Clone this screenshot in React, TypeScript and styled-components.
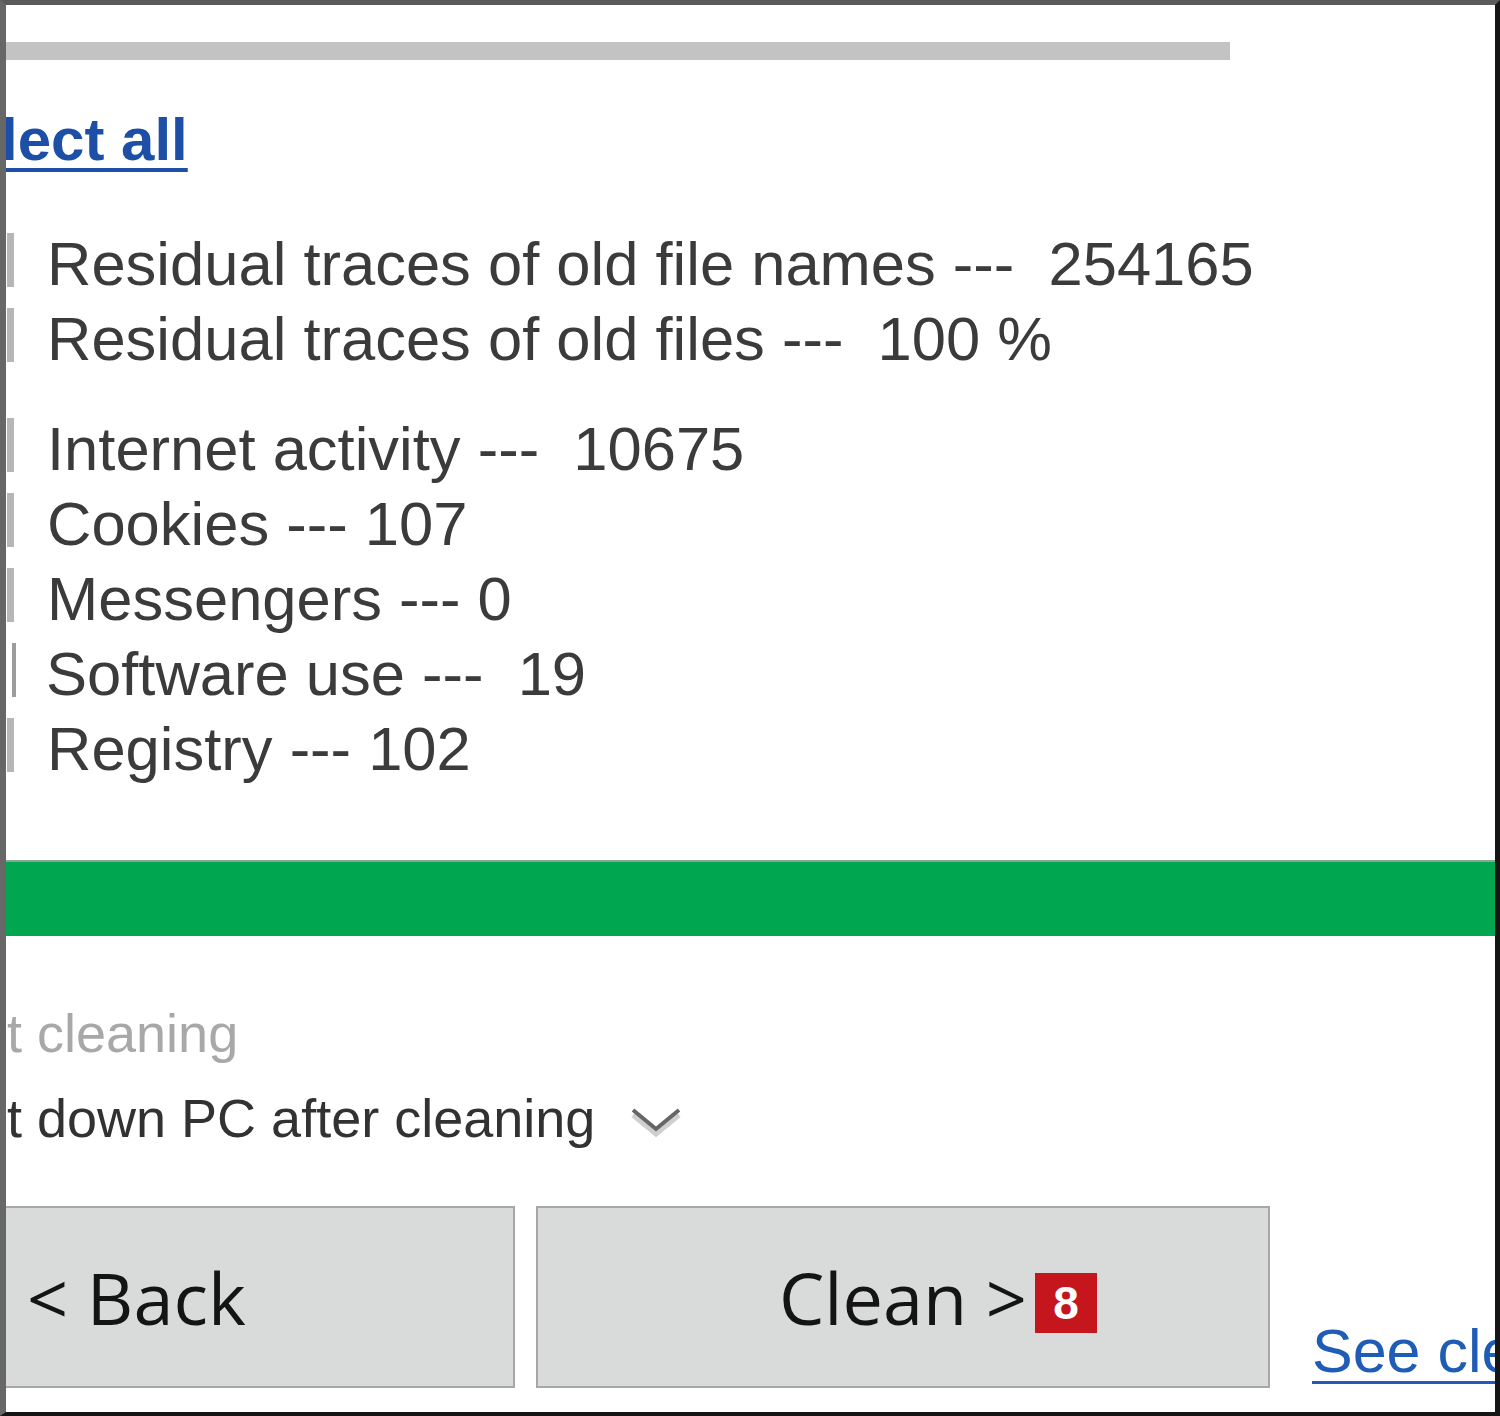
import React from 'react';
import styled, { createGlobalStyle } from 'styled-components';

const GlobalStyle = createGlobalStyle`
  body {
    margin: 0;
    background: #ffffff;
  }
`;

interface Trace {
  label: string;
  shift?: boolean;
}

const systemTraces: Trace[] = [
  { label: 'Residual traces of old file names ---  254165' },
  { label: 'Residual traces of old files ---  100 %' },
];

const activityTraces: Trace[] = [
  { label: 'Internet activity ---  10675' },
  { label: 'Cookies --- 107' },
  { label: 'Messengers --- 0' },
  { label: 'Software use ---  19', shift: true },
  { label: 'Registry --- 102' },
];

const App: React.FC = () => {
  return (
    <>
      <GlobalStyle />
      <Frame>
        <ProgressTrack />
        <SelectAll href='#'>lect all</SelectAll>

        <TraceGroup>
          {systemTraces.map((trace) => (
            <TraceRow key={trace.label}>
              <CheckEdge $shift={trace.shift} />
              <TraceText>{trace.label}</TraceText>
            </TraceRow>
          ))}
        </TraceGroup>

        <TraceGroup $spaced>
          {activityTraces.map((trace) => (
            <TraceRow key={trace.label}>
              <CheckEdge $shift={trace.shift} />
              <TraceText>{trace.label}</TraceText>
            </TraceRow>
          ))}
        </TraceGroup>

        <GreenBand />

        <OptionList>
          <OptionRow $muted>t cleaning</OptionRow>
          <OptionRow>
            t down PC after cleaning
            <Chevron width='54' height='34' viewBox='0 0 54 34'>
              <polyline
                points='4,10 27,29 50,10'
                fill='none'
                stroke='#cfcfcf'
                strokeWidth='5'
              />
              <polyline
                points='4,5 27,24 50,5'
                fill='none'
                stroke='#666666'
                strokeWidth='4'
              />
            </Chevron>
          </OptionRow>
        </OptionList>

        <ActionBar>
          <WizardButton $clipped $width={509}>
            &lt; Back
          </WizardButton>
          <WizardButton $width={734}>
            Clean &gt;
            <StepBadge>8</StepBadge>
          </WizardButton>
          <DetailsLink href='#'>See cleaning details</DetailsLink>
        </ActionBar>
      </Frame>
    </>
  );
};

export default App;

const Frame = styled.div`
  width: 1500px;
  height: 1416px;
  box-sizing: border-box;
  display: flex;
  flex-direction: column;
  overflow: hidden;
  background: #ffffff;
  border-top: 5px solid #5b5b5b;
  border-left: 6px solid #676767;
  border-right: 5px solid #151515;
  border-bottom: 4px solid #151515;
  font-family: 'Liberation Sans', Arial, sans-serif;
`;

const ProgressTrack = styled.div`
  flex-shrink: 0;
  margin-top: 37px;
  width: 1224px;
  height: 18px;
  background: #c3c3c3;
`;

const SelectAll = styled.a`
  align-self: flex-start;
  margin-top: 42px;
  margin-left: -5px;
  font-size: 60px;
  font-weight: 700;
  line-height: 75px;
  color: #1d4fa6;
  text-decoration: underline;
  text-decoration-thickness: 4px;
  text-underline-offset: 8px;
`;

const TraceGroup = styled.div<{ $spaced?: boolean }>`
  display: flex;
  flex-direction: column;
  flex-shrink: 0;
  margin-top: ${({ $spaced }) => ($spaced ? '35px' : '49px')};
`;

const TraceRow = styled.div`
  display: flex;
  align-items: flex-start;
  height: 75px;
`;

const CheckEdge = styled.span<{ $shift?: boolean }>`
  flex-shrink: 0;
  width: ${({ $shift }) => ($shift ? '4px' : '7px')};
  height: 54px;
  margin-top: 7px;
  margin-left: ${({ $shift }) => ($shift ? '6px' : '1px')};
  margin-right: ${({ $shift }) => ($shift ? '30px' : '33px')};
  background: ${({ $shift }) => ($shift ? '#9c9c9c' : '#b6b6b6')};
`;

const TraceText = styled.span`
  font-size: 61.5px;
  line-height: 75px;
  color: #3b3b3b;
  white-space: pre;
`;

const GreenBand = styled.div`
  flex-shrink: 0;
  box-sizing: border-box;
  margin-top: 74px;
  height: 76px;
  background: #00a650;
  border-top: 2px solid #8aa596;
`;

const OptionList = styled.div`
  display: flex;
  flex-direction: column;
  flex-shrink: 0;
  margin-top: 55px;
`;

const OptionRow = styled.div<{ $muted?: boolean }>`
  display: flex;
  align-items: center;
  height: 85px;
  padding-left: 1px;
  font-size: 54px;
  line-height: 85px;
  white-space: nowrap;
  color: ${({ $muted }) => ($muted ? '#a8a8a8' : '#323232')};
`;

const Chevron = styled.svg`
  flex-shrink: 0;
  margin-left: 34px;
  margin-top: 6px;
`;

const ActionBar = styled.div`
  display: flex;
  flex-shrink: 0;
  gap: 21px;
  margin-top: 45px;
  height: 182px;
`;

const WizardButton = styled.div<{ $clipped?: boolean; $width: number }>`
  position: relative;
  flex-shrink: 0;
  box-sizing: border-box;
  display: flex;
  align-items: center;
  justify-content: ${({ $clipped }) => ($clipped ? 'flex-start' : 'center')};
  width: ${({ $width }) => $width}px;
  height: 182px;
  padding-left: ${({ $clipped }) => ($clipped ? '21px' : '0')};
  background: #d9dbda;
  border: 2px solid #a7a7a7;
  border-left: ${({ $clipped }) => ($clipped ? 'none' : '2px solid #a7a7a7')};
  font-family: 'Open Sans', 'Noto Sans', sans-serif;
  font-size: 72px;
  color: #141414;
  white-space: nowrap;
`;

const StepBadge = styled.span`
  position: absolute;
  left: 497px;
  top: 65px;
  width: 62px;
  height: 60px;
  display: flex;
  align-items: center;
  justify-content: center;
  background: #c5161d;
  color: #ffffff;
  font-family: 'Liberation Sans', Arial, sans-serif;
  font-size: 46px;
  font-weight: 700;
`;

const DetailsLink = styled.a`
  flex-shrink: 0;
  align-self: flex-end;
  margin-left: 21px;
  margin-bottom: 2px;
  font-size: 61px;
  line-height: 70px;
  color: #1f5cb5;
  white-space: nowrap;
  text-decoration: underline;
  text-decoration-thickness: 3px;
  text-underline-offset: 9px;
`;
